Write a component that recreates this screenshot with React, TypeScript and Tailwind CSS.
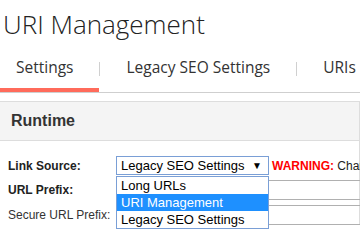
const sans = { fontFamily: '"Open Sans", "Noto Sans", sans-serif' };

const tabs = ["Settings", "Legacy SEO Settings", "URIs"];
const options = ["Long URLs", "URI Management", "Legacy SEO Settings"];

export default function App() {
  return (
    <div className="relative w-[360px] h-[249px] overflow-hidden bg-white text-[#333] font-['Liberation_Sans',Arial,sans-serif]">
      <h1 className="pl-[3px] pt-[7px] text-[26px] leading-[34px] font-light text-[#222] font-['Open_Sans','Noto_Sans',sans-serif] whitespace-nowrap">
        URI Management
      </h1>

      <nav className="mt-[7px] flex items-stretch h-[45px] border-b border-[#cfcfcf] text-[15.5px] text-[#333] whitespace-nowrap" style={sans}>
        {tabs.map((t, i) => (
          <div key={t} className="flex items-stretch shrink-0">
            {i > 0 && <span className="self-center w-px h-[14px] bg-[#d0d0d0] -mt-[2px]" />}
            <div
              className={
                i === 0
                  ? "flex items-center pl-[16px] pr-[26px] border-b-[4px] border-[#ff6b5b]"
                  : "flex items-center px-[26px] border-b-[4px] border-transparent"
              }
            >
              {t}
            </div>
          </div>
        ))}
      </nav>

      <section className="mt-[8px] border-t border-r border-[#dddddd]">
        <div className="h-[39px] flex items-center pl-[11px] bg-[#f4f4f4] border-b border-[#dddddd] text-[16px] font-bold text-[#333]">
          Runtime
        </div>

        <div className="relative pt-[15px] pl-[8px] flex flex-col gap-[5px] text-[12px] text-[#222] whitespace-nowrap">
          <div className="flex items-center h-[19px]">
            <span className="w-[108px] shrink-0 font-bold">Link Source:</span>
            <div className="w-[153px] h-[19px] shrink-0 flex items-center justify-between pl-[4px] pr-[6px] border border-[#7a9fd6] bg-white text-[13px] text-black">
              <span>Legacy SEO Settings</span>
              <span className="text-[10px]">▼</span>
            </div>
            <span className="ml-[3px] shrink-0">
              <b className="text-[#ff0000]">WARNING:</b> Changing this setting
            </span>
          </div>
          <div className="flex items-center h-[20px]">
            <span className="w-[108px] shrink-0 font-bold">URL Prefix:</span>
            <div className="w-[270px] h-[20px] shrink-0 border border-[#b0b0b0]" />
          </div>
          <div className="flex items-center h-[20px]">
            <span className="w-[108px] shrink-0 text-[#333]">Secure URL Prefix:</span>
            <div className="w-[270px] h-[20px] shrink-0 border border-[#b0b0b0]" />
          </div>

          <ul className="absolute left-[116px] top-[35px] w-[153px] border border-[#7a9fd6] bg-white text-[13px] text-black">
            {options.map((o, i) => (
              <li
                key={o}
                className={
                  i === 1
                    ? "h-[17px] leading-[17px] pl-[4px] bg-[#1e90ff] text-white"
                    : "h-[17px] leading-[17px] pl-[4px]"
                }
              >
                {o}
              </li>
            ))}
          </ul>
        </div>
      </section>
    </div>
  );
}
